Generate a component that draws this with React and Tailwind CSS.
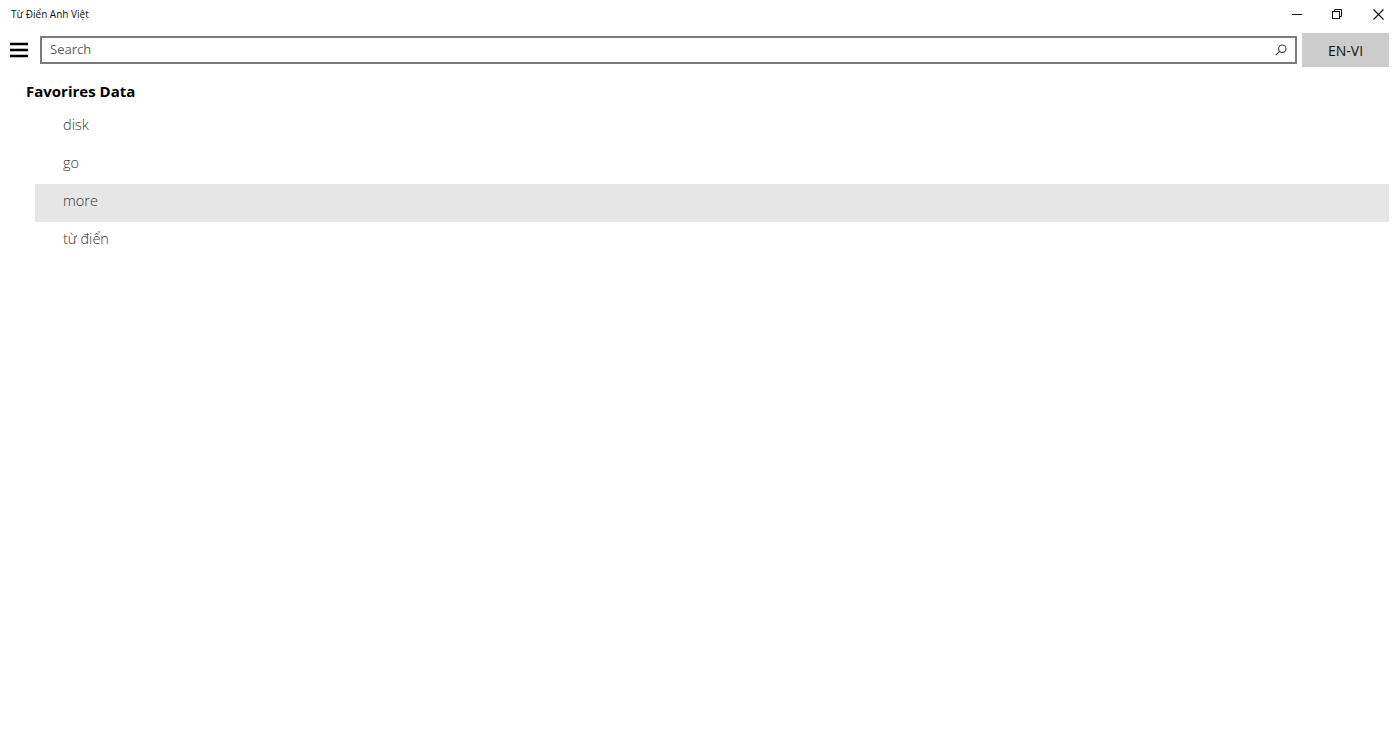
import React from 'react';

const words = ['disk', 'go', 'more', 'từ điển'];

const App = () => {
    const selected = 'more';

    return (
        <div className="w-[1399px] h-[751px] bg-white overflow-hidden font-['Open_Sans','Noto_Sans',sans-serif] text-black">
            {/* Title bar */}
            <div className="h-[28px] flex items-center justify-between">
                <span className="pl-[11px] pt-[1px] text-[10px] text-[#111]">Từ Điển Anh Việt</span>
                <div className="flex h-full">
                    <button className="w-[40px] h-full flex items-center justify-center">
                        <svg width="10" height="10" viewBox="0 0 10 10"><path d="M0 5.5h10" stroke="#111" strokeWidth="1" /></svg>
                    </button>
                    <button className="w-[40px] h-full flex items-center justify-center">
                        <svg width="10" height="10" viewBox="0 0 10 10" fill="none" stroke="#111" strokeWidth="1">
                            <rect x="0.5" y="2.5" width="7" height="7" />
                            <path d="M2.5 2.5V0.5h7v7h-2" />
                        </svg>
                    </button>
                    <button className="w-[42px] h-full flex items-center justify-center">
                        <svg width="11" height="11" viewBox="0 0 11 11" stroke="#111" strokeWidth="1.1"><path d="M0.5 0.5l10 10M10.5 0.5l-10 10" /></svg>
                    </button>
                </div>
            </div>

            {/* Search row */}
            <div className="flex items-center h-[34px] mt-[5px]">
                <button className="w-[40px] h-full flex items-center justify-center pl-[6px] pr-[9px]">
                    <svg width="18" height="16" viewBox="0 0 18 16" stroke="#000" strokeWidth="2.6"><path d="M0 2h18M0 8h18M0 14h18" /></svg>
                </button>
                <div className="flex-1 h-[28px] border-2 border-[#7a7a7a] flex items-center justify-between px-[8px]">
                    <span className="text-[13px] text-[#5d5d5d]">Search</span>
                    <svg width="12" height="12" viewBox="0 0 12 12" fill="none" stroke="#333" strokeWidth="1.1">
                        <circle cx="7.3" cy="4.7" r="3.7" />
                        <path d="M4.6 7.4L0.8 11.2" />
                    </svg>
                </div>
                <button className="ml-[5px] mr-[10px] w-[87px] h-[34px] bg-[#cccccc] text-[14px] text-[#111]">EN-VI</button>
            </div>

            {/* Favorites */}
            <div className="pt-[13px]">
                <h2 className="pl-[26px] text-[15px] font-bold leading-[22px]">Favorires Data</h2>
                <ul className="pl-[35px] pr-[10px] mt-[6px]">
                    {words.map(word => (
                        <li
                            key={word}
                            className={`h-[38px] flex items-center pl-[28px] pb-[4px] text-[14.5px] font-light text-[#333] ${word === selected ? 'bg-[#e6e6e6]' : ''}`}
                        >
                            {word}
                        </li>
                    ))}
                </ul>
            </div>
        </div>
    );
};

export default App;
